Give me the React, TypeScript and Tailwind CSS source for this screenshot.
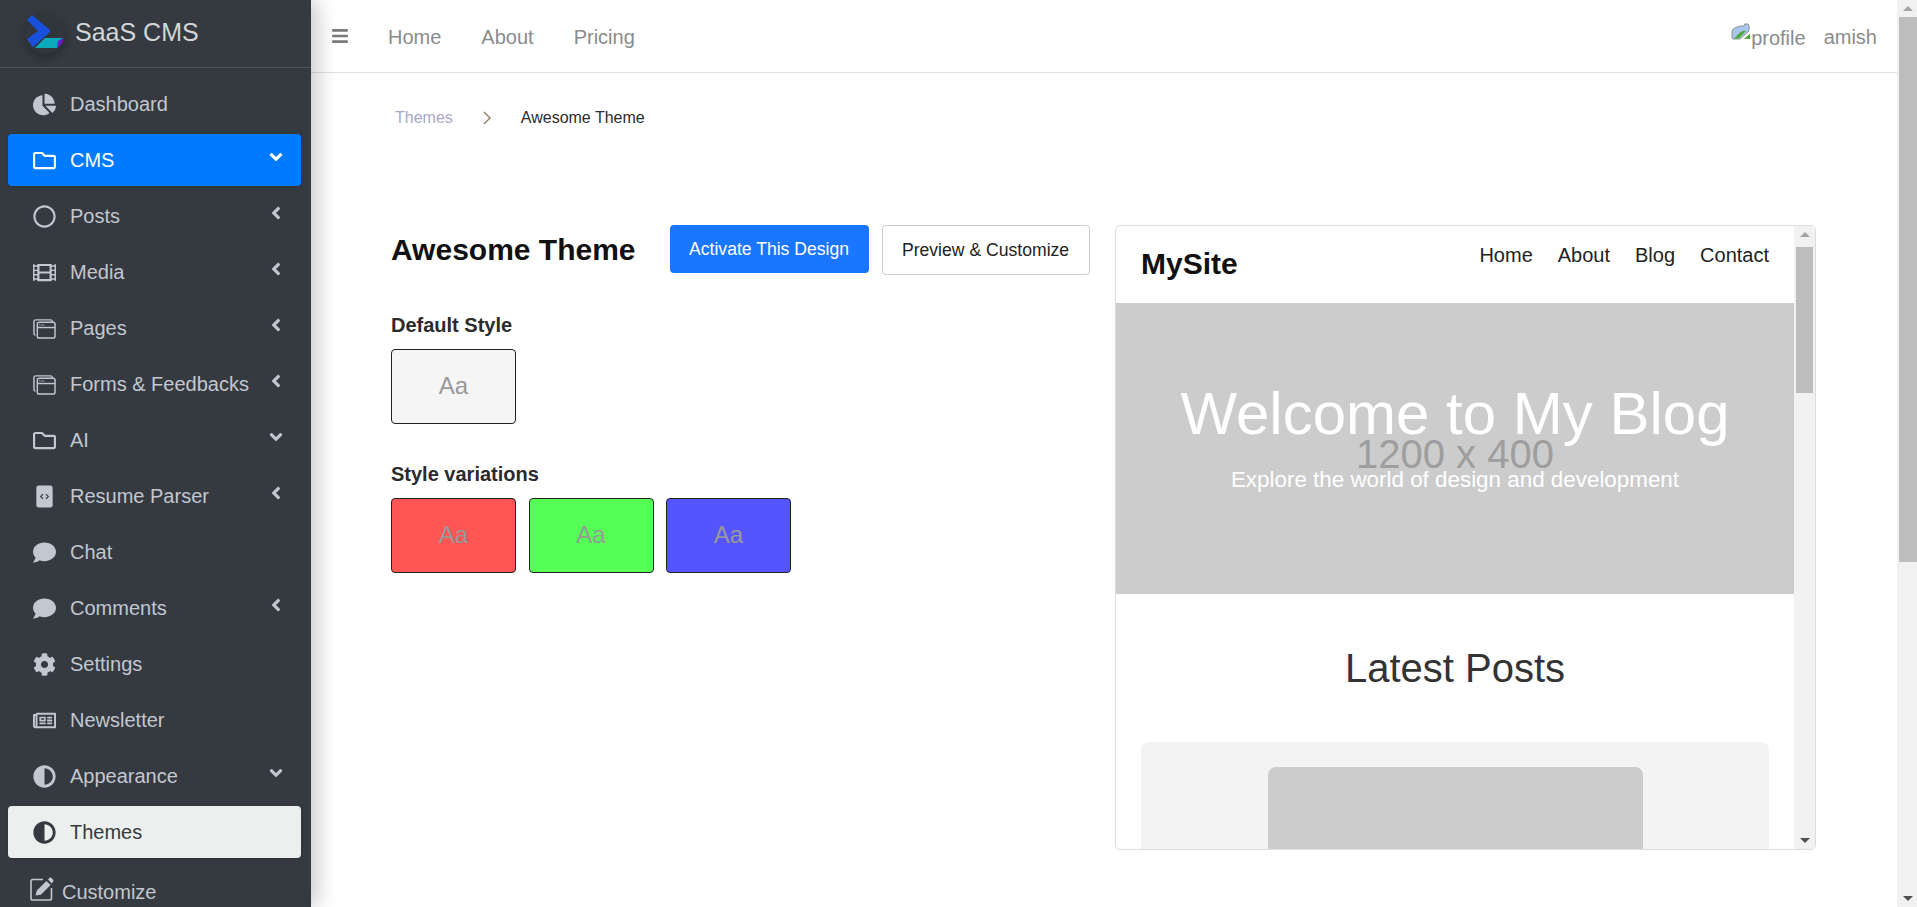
import React from "react";
import {
  FaChartPie, FaRegFolder, FaRegCircle, FaFilm, FaComment,
  FaCog, FaRegNewspaper, FaAdjust, FaAngleLeft, FaAngleDown, FaBars,
} from "react-icons/fa";

type IconProps = { className?: string };

function WindowIcon({ className }: IconProps) {
  return (
    <svg viewBox="0 0 24 24" className={className} fill="none" stroke="currentColor" strokeWidth="1.5">
      <path d="M2.5 19 Q1 18.5 1 17 V5 Q1 3 3 3 H18 Q20 3 20.5 5" />
      <rect x="4.5" y="5.5" width="18.5" height="16.5" rx="2" />
      <path d="M4.5 11 H23" />
      <path d="M6.5 8.4 H12" strokeDasharray="1.2 0.8" strokeWidth="1.1" />
    </svg>
  );
}

function CodeFileIcon({ className }: IconProps) {
  return (
    <svg viewBox="0 0 24 24" className={className}>
      <rect x="3.5" y="0.5" width="17" height="23" rx="2.5" fill="currentColor" />
      <path d="M10.5 9.5 L8 12 L10.5 14.5 M13.5 9.5 L16 12 L13.5 14.5" fill="none" stroke="#343a40" strokeWidth="1.2" />
    </svg>
  );
}

function EditIcon({ className }: IconProps) {
  return (
    <svg viewBox="0 0 24 24" className={className}>
      <path d="M13 2.5 H2.8 Q1 2.5 1 4.3 V21.2 Q1 23 2.8 23 H19.7 Q21.5 23 21.5 21.2 V11" fill="none" stroke="currentColor" strokeWidth="1.6" />
      <path d="M5.5 18.5 L6.8 13.6 L16.5 3.9 L20.6 8 L10.9 17.7 Z" fill="currentColor" />
      <path d="M18 2.4 L19.6 0.8 Q20.4 0.2 21.2 0.8 L23.2 2.8 Q23.8 3.6 23.2 4.4 L21.7 6.5 Z" fill="currentColor" />
    </svg>
  );
}

type Item = { label: string; Icon: React.ComponentType<IconProps>; arrow?: "left" | "down"; state?: "blue" | "light" };

const items: Item[] = [
  { label: "Dashboard", Icon: FaChartPie },
  { label: "CMS", Icon: FaRegFolder, arrow: "down", state: "blue" },
  { label: "Posts", Icon: FaRegCircle, arrow: "left" },
  { label: "Media", Icon: FaFilm, arrow: "left" },
  { label: "Pages", Icon: WindowIcon, arrow: "left" },
  { label: "Forms & Feedbacks", Icon: WindowIcon, arrow: "left" },
  { label: "AI", Icon: FaRegFolder, arrow: "down" },
  { label: "Resume Parser", Icon: CodeFileIcon, arrow: "left" },
  { label: "Chat", Icon: FaComment },
  { label: "Comments", Icon: FaComment, arrow: "left" },
  { label: "Settings", Icon: FaCog },
  { label: "Newsletter", Icon: FaRegNewspaper },
  { label: "Appearance", Icon: FaAdjust, arrow: "down" },
  { label: "Themes", Icon: FaAdjust, state: "light" },
];

function Row({ item }: { item: Item }) {
  const { Icon } = item;
  const tone =
    item.state === "blue"
      ? "bg-[#007bff] text-white shadow-sm"
      : item.state === "light"
      ? "bg-[#ecefee] text-[#343a40] shadow-sm"
      : "text-[#c2c7d0]";
  return (
    <div className={`ml-2 mr-[10px] mb-1 flex h-[52px] shrink-0 items-center rounded-[4px] pl-[25px] pr-[15px] ${tone}`}>
      <Icon className="h-[23px] w-[23px] shrink-0" />
      <span className="ml-[14px] whitespace-nowrap text-[20px] leading-none">{item.label}</span>
      {item.arrow === "left" && <FaAngleLeft className="ml-auto mb-[6px] h-[20px] w-[20px] shrink-0" />}
      {item.arrow === "down" && <FaAngleDown className="ml-auto mb-[6px] h-[20px] w-[20px] shrink-0" />}
    </div>
  );
}

function Logo() {
  return (
    <div className="relative h-10 w-10 shrink-0 rounded-full bg-[#30363b] shadow-[0_3px_8px_rgba(0,0,0,0.3)]">
      <svg viewBox="0 0 40 40" className="h-10 w-10">
        <path d="M2 6 L7 1 L25 16 V18 L8 33 L2 25 L13 17 Z" fill="#1750dc" />
        <path d="M10 34 L20 24 L38 24 L32 34 Z" fill="#0daabb" />
        <path d="M32 34 L33 27 L38 24 L38 27 Q36 32 32 34 Z" fill="#6a19c8" />
      </svg>
    </div>
  );
}

function Sidebar() {
  return (
    <aside className="z-10 flex h-full w-[311px] shrink-0 flex-col overflow-hidden bg-[#343a40] shadow-[6px_0_20px_rgba(0,0,0,0.22)]">
      <div className="flex h-[68px] shrink-0 items-center border-b border-[#4b545c] pl-[25px]">
        <Logo />
        <span className="ml-[10px] mb-[3px] text-[25px] leading-none text-[#d3d5d7]">SaaS CMS</span>
      </div>
      <nav className="flex flex-col pt-[10px]">
        {items.map((i) => (
          <Row key={i.label} item={i} />
        ))}
        <div className="flex h-[60px] shrink-0 items-center pl-[30px] text-[#c2c7d0]">
          <EditIcon className="mb-[6px] h-[24px] w-[24px]" />
          <span className="ml-[8px] text-[20px] leading-none">Customize</span>
        </div>
      </nav>
    </aside>
  );
}

function BrokenImage() {
  return (
    <svg viewBox="0 0 20 18" className="mb-[8px] h-[18px] w-[20px] shrink-0">
      <path d="M1 15 V9 Q1 6 4 5 L9 3 H13 L13.5 1 H17 L18 3 V8 L9 16 H3 Q1 16 1 15 Z" fill="#a9c6ee" stroke="#8c9096" strokeWidth="1" />
      <path d="M3 15.5 L9 9.5 Q12 7 15 8 L8 15.5 Z" fill="#4fa83d" />
      <path d="M13 16 L19 10.5 L19 16 Z" fill="#4fa83d" />
    </svg>
  );
}

function Header() {
  return (
    <header className="flex h-[73px] shrink-0 items-center border-b border-[#dee2e6] bg-white pl-[20px] pr-[20px] text-[20px] text-[#8b8b8b]">
      <FaBars className="mr-[39px] h-[18px] w-[18px] text-[#7a7a7a]" />
      <nav className="mt-[1px] flex gap-[40px]">
        <span>Home</span>
        <span>About</span>
        <span>Pricing</span>
      </nav>
      <div className="ml-auto flex items-center">
        <BrokenImage />
        <span className="mt-[3px]">profile</span>
        <span className="ml-[18px] mt-[1px]">amish</span>
      </div>
    </header>
  );
}

function Swatch({ className }: { className: string }) {
  return (
    <div className={`flex h-[75px] w-[125px] items-center justify-center rounded-[4px] border border-[#222] pb-[2px] text-[24px] text-[#999] ${className}`}>
      Aa
    </div>
  );
}

function ScrollTrack({ thumb, className }: { thumb: string; className: string }) {
  return (
    <div className={`flex shrink-0 flex-col items-center bg-[#f1f1f1] ${className}`}>
      <div className="flex h-[17px] shrink-0 items-center justify-center">
        <div className="h-0 w-0 border-x-[5px] border-b-[5px] border-x-transparent border-b-[#a3a3a3]" />
      </div>
      <div className={`w-full shrink-0 bg-[#bdbdbd] ${thumb}`} />
      <div className="mt-auto flex h-[17px] shrink-0 items-center justify-center">
        <div className="h-0 w-0 border-x-[5px] border-t-[5px] border-x-transparent border-t-[#505050]" />
      </div>
    </div>
  );
}

function Preview() {
  return (
    <div className="flex h-[625px] w-[701px] shrink-0 overflow-hidden rounded-[5px] border border-[#dcdcdc] bg-white">
      <div className="min-w-0 flex-1 overflow-hidden">
        <div className="flex h-[77px] justify-between px-[25px]">
          <span className="mt-[21px] text-[30px] font-bold leading-[34px] text-[#111]">MySite</span>
          <div className="mt-[18px] flex gap-[25px] text-[20px] leading-[23px] text-[#222]">
            <span>Home</span>
            <span>About</span>
            <span>Blog</span>
            <span>Contact</span>
          </div>
        </div>
        <section className="relative flex h-[291px] flex-col items-center bg-[#cccccc] pt-[76px] text-white">
          <span className="absolute top-[128px] text-[40px] leading-[46px] text-[#9e9e9e]">1200 x 400</span>
          <h2 className="relative text-[60px] leading-[70px]">Welcome to My Blog</h2>
          <p className="relative mt-[17px] text-[22.4px] leading-[28px]">Explore the world of design and development</p>
        </section>
        <h3 className="mt-[51px] text-center text-[40px] leading-[46px] text-[#333]">Latest Posts</h3>
        <div className="mx-[25px] mt-[51px] h-[200px] rounded-[8px] bg-[#f3f3f3] pt-[25px]">
          <div className="mx-auto h-[200px] w-[375px] rounded-[8px] bg-[#cccccc]" />
        </div>
      </div>
      <ScrollTrack className="h-full w-[21px] pl-[2px] pr-[2px]" thumb="h-[146px] mt-[4px]" />
    </div>
  );
}

export default function App() {
  return (
    <div className="flex h-[907px] w-[1917px] overflow-hidden bg-white font-['Liberation_Sans',Arial,sans-serif]">
      <Sidebar />
      <main className="flex min-w-0 flex-1 flex-col">
        <Header />
        <div className="flex min-h-0 flex-1 flex-col pl-[80px]">
          <div className="flex h-[90px] shrink-0 items-center pl-[4px] text-[16px]">
            <span className="text-[#a8a8c8]">Themes</span>
            <svg viewBox="0 0 12 16" className="mx-[28px] h-[16px] w-[12px]" fill="none" stroke="#8a7a68" strokeWidth="1.4">
              <path d="M3 2 L9 8 L3 14" />
            </svg>
            <span className="text-[#2b2b33]">Awesome Theme</span>
          </div>
          <div className="mt-[62px] flex gap-[25px]">
            <div className="w-[699px] shrink-0">
              <div className="flex items-start">
                <h1 className="mt-[7px] text-[30px] font-bold leading-[36px] text-[#111]">Awesome Theme</h1>
                <button className="ml-[34px] h-[48px] w-[199px] rounded-[4px] bg-[#1a75ff] text-[17.6px] text-white">
                  Activate This Design
                </button>
                <button className="ml-[13px] h-[50px] w-[208px] rounded-[4px] border border-[#cccccc] bg-white text-[17.6px] text-[#222]">
                  Preview &amp; Customize
                </button>
              </div>
              <h4 className="mt-[39px] text-[20px] font-bold leading-[23px] text-[#2b2b2b]">Default Style</h4>
              <div className="mt-[12px] flex">
                <Swatch className="bg-[#f5f5f5]" />
              </div>
              <h4 className="mt-[39px] text-[20px] font-bold leading-[23px] text-[#2b2b2b]">Style variations</h4>
              <div className="mt-[12px] flex gap-[12.5px]">
                <Swatch className="bg-[#ff5555]" />
                <Swatch className="bg-[#55ff55]" />
                <Swatch className="bg-[#5555ff]" />
              </div>
            </div>
            <Preview />
          </div>
        </div>
      </main>
      <ScrollTrack className="h-full w-[20px] pl-[2px]" thumb="h-[545px]" />
    </div>
  );
}
